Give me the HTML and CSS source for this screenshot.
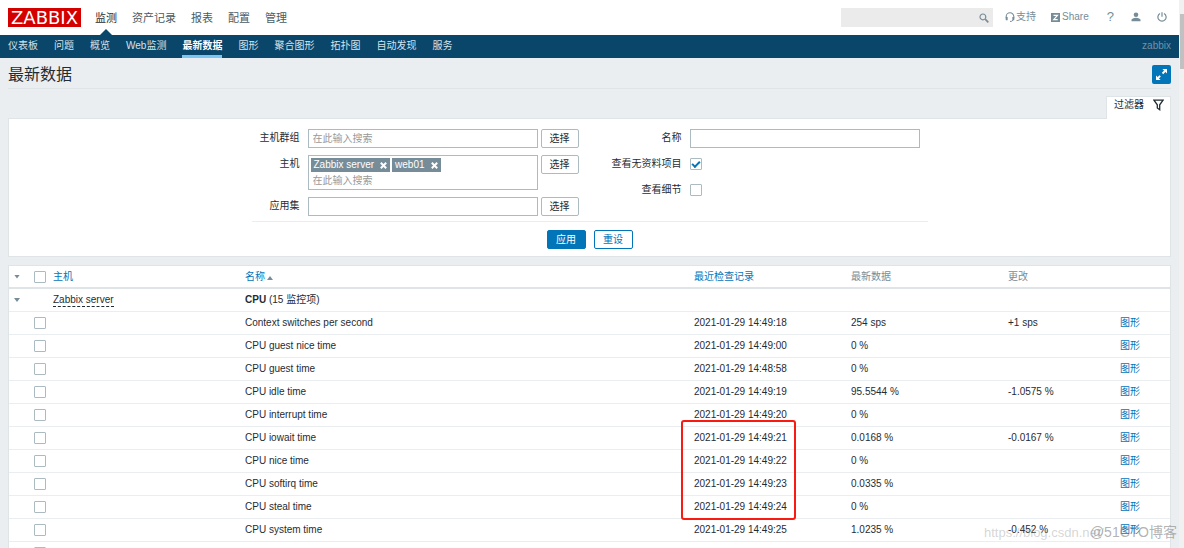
FILE: index.html
```html
<!DOCTYPE html>
<html lang="zh-CN">
<head>
<meta charset="utf-8">
<title>最新数据</title>
<link rel="stylesheet" href="styles.css">
</head>
<body>
<div class="page">
<header class="top">
  <a class="logo" href="#">ZABBIX</a>
  <nav class="menu">
    <a class="current" href="#">监测</a><a href="#">资产记录</a><a href="#">报表</a><a href="#">配置</a><a href="#">管理</a>
  </nav>
  <form class="search">
    <input type="text" aria-label="Search">
    <button type="button" aria-label="Go"><svg width="10" height="10" viewBox="0 0 10 10" fill="none" stroke="#768d99"><circle cx="3.9" cy="3.9" r="2.9" stroke-width="1.2"/><path d="M6.2 6.2L9.3 9.3" stroke-width="1.7"/></svg></button>
  </form>
  <div class="tools">
    <a class="support" href="#"><svg width="10" height="10" viewBox="0 0 10 10" fill="none" stroke="#768d99"><path d="M1.2 6.5V4.6a3.8 3.8 0 0 1 7.6 0v1.9" stroke-width="1.1"/><path d="M1.7 5v3.2M8.3 5v3.2" stroke-width="1.9"/><path d="M8.3 8L6.4 9.4H5" stroke-width="1"/></svg>支持</a>
    <a class="share" href="#"><svg width="9" height="9" viewBox="0 0 9 9"><rect width="9" height="9" fill="#768d99"/><path d="M2.5 2.3h4L2.7 6.7h4" fill="none" stroke="#fff" stroke-width="1.2"/></svg>Share</a>
    <a class="help" href="#">?</a>
    <a class="user" href="#" aria-label="Profile"><svg width="10" height="10" viewBox="0 0 10 10" fill="#768d99"><circle cx="5" cy="2.7" r="2.3"/><path d="M.5 9.3V7.6Q1.8 5.8 5 5.8t4.5 1.8v1.7z"/></svg></a>
    <a class="power" href="#" aria-label="Sign out"><svg width="10" height="10" viewBox="0 0 10 10" fill="none" stroke="#768d99" stroke-width="1.2"><path d="M3 1.5a4.1 4.1 0 1 0 4 0M5 .2v4.6"/></svg></a>
  </div>
</header>
<nav class="sub">
  <a href="#">仪表板</a><a href="#">问题</a><a href="#">概览</a><a href="#">Web监测</a><a class="selected" href="#">最新数据</a><a href="#">图形</a><a href="#">聚合图形</a><a href="#">拓扑图</a><a href="#">自动发现</a><a href="#">服务</a>
  <span class="server">zabbix</span>
</nav>
<main>
  <div class="title">
    <h1>最新数据</h1>
    <button class="full" type="button" aria-label="Fullscreen"><svg width="11" height="11" viewBox="0 0 11 11" fill="#fff" stroke="#fff"><path d="M6.4 0H11v4.6zM0 6.4V11h4.6z" stroke="none"/><path d="M9 2L6.5 4.5M2 9l2.2-2.2" stroke-width="1.8"/></svg></button>
  </div>
  <div class="tabs"><a class="tab" href="#">过滤器<svg width="11" height="12" viewBox="0 0 11 12" fill="none" stroke="#1f2c33" stroke-width="1.3"><path d="M.9 1.2h9.2L6.7 5.8v4.9L4.3 9V5.8z"/></svg></a></div>
  <form class="filter">
    <div class="fields">
      <div class="column">
        <div class="field"><label for="groups">主机群组</label><div class="multi"><input id="groups" type="text" placeholder="在此输入搜索"></div><button class="pick" type="button">选择</button></div>
        <div class="field"><label for="hosts">主机</label><div class="multi"><div class="tags"><span class="tag">Zabbix server<button type="button" aria-label="Remove"><svg width="7" height="7" viewBox="0 0 7 7" stroke="#fff" stroke-width="2"><path d="M.8.8l5.4 5.4M6.2.8L.8 6.2"/></svg></button></span><span class="tag">web01<button type="button" aria-label="Remove"><svg width="7" height="7" viewBox="0 0 7 7" stroke="#fff" stroke-width="2"><path d="M.8.8l5.4 5.4M6.2.8L.8 6.2"/></svg></button></span></div><input id="hosts" type="text" placeholder="在此输入搜索"></div><button class="pick" type="button">选择</button></div>
        <div class="field"><label for="app">应用集</label><div class="multi"><input id="app" type="text"></div><button class="pick" type="button">选择</button></div>
      </div>
      <div class="column right">
        <div class="field"><label for="name">名称</label><div class="multi"><input id="name" type="text"></div></div>
        <div class="field"><label for="empty">查看无资料项目</label><input id="empty" type="checkbox" checked></div>
        <div class="field"><label for="details">查看细节</label><input id="details" type="checkbox"></div>
      </div>
    </div>
    <div class="actions"><button class="apply" type="button">应用</button><button class="reset" type="button">重设</button></div>
  </form>
  <table class="data">
    <colgroup><col class="c-arrow"><col class="c-check"><col class="c-host"><col><col class="c-value"><col class="c-value"><col class="c-change"><col class="c-link"></colgroup>
    <thead>
      <tr><th><button class="toggle" type="button" aria-label="Collapse all"></button></th><th><input type="checkbox" aria-label="Select all"></th><th><a href="#">主机</a></th><th><a class="sorted" href="#">名称</a></th><th><a href="#">最近检查记录</a></th><th>最新数据</th><th>更改</th><th></th></tr>
    </thead>
    <tbody>
      <tr><td><button class="toggle" type="button" aria-label="Collapse"></button></td><td></td><td><a class="host" href="#">Zabbix server</a></td><td colspan="5"><b>CPU</b> (15 监控项)</td></tr>
      <tr><td></td><td><input type="checkbox" aria-label="Select item"></td><td></td><td>Context switches per second</td><td>2021-01-29 14:49:18</td><td>254 sps</td><td>+1 sps</td><td><a href="#">图形</a></td></tr>
      <tr><td></td><td><input type="checkbox" aria-label="Select item"></td><td></td><td>CPU guest nice time</td><td>2021-01-29 14:49:00</td><td>0 %</td><td></td><td><a href="#">图形</a></td></tr>
      <tr><td></td><td><input type="checkbox" aria-label="Select item"></td><td></td><td>CPU guest time</td><td>2021-01-29 14:48:58</td><td>0 %</td><td></td><td><a href="#">图形</a></td></tr>
      <tr><td></td><td><input type="checkbox" aria-label="Select item"></td><td></td><td>CPU idle time</td><td>2021-01-29 14:49:19</td><td>95.5544 %</td><td>-1.0575 %</td><td><a href="#">图形</a></td></tr>
      <tr><td></td><td><input type="checkbox" aria-label="Select item"></td><td></td><td>CPU interrupt time</td><td>2021-01-29 14:49:20</td><td>0 %</td><td></td><td><a href="#">图形</a></td></tr>
      <tr><td></td><td><input type="checkbox" aria-label="Select item"></td><td></td><td>CPU iowait time</td><td class="marked">2021-01-29 14:49:21<span class="mark"></span></td><td>0.0168 %</td><td>-0.0167 %</td><td><a href="#">图形</a></td></tr>
      <tr><td></td><td><input type="checkbox" aria-label="Select item"></td><td></td><td>CPU nice time</td><td>2021-01-29 14:49:22</td><td>0 %</td><td></td><td><a href="#">图形</a></td></tr>
      <tr><td></td><td><input type="checkbox" aria-label="Select item"></td><td></td><td>CPU softirq time</td><td>2021-01-29 14:49:23</td><td>0.0335 %</td><td></td><td><a href="#">图形</a></td></tr>
      <tr><td></td><td><input type="checkbox" aria-label="Select item"></td><td></td><td>CPU steal time</td><td>2021-01-29 14:49:24</td><td>0 %</td><td></td><td><a href="#">图形</a></td></tr>
      <tr><td></td><td><input type="checkbox" aria-label="Select item"></td><td></td><td>CPU system time</td><td>2021-01-29 14:49:25</td><td>1.0235 %</td><td>-0.452 %</td><td><a href="#">图形</a></td></tr>
      <tr><td></td><td><input type="checkbox" aria-label="Select item"></td><td></td><td></td><td></td><td></td><td></td><td></td></tr>
    </tbody>
  </table>
</main>
</div>
<div class="scrollbar"><div class="thumb"></div></div>
<div class="stamp url">https://blog.csdn.net/</div>
<div class="stamp brand">@51CTO博客</div>
</body>
</html>
```
FILE: styles.css
```css
* { box-sizing: border-box; }
body {
  margin: 0;
  height: 100vh;
  overflow: hidden;
  position: relative;
  display: flex;
  background: #ebeef0;
  color: #1f2c33;
  font: 10px/14px "Liberation Sans", "Noto Sans CJK SC", sans-serif;
}
a { color: #0275b8; text-decoration: none; }
button, input { font: inherit; color: inherit; margin: 0; padding: 0; }
button { cursor: pointer; }
svg { display: block; flex: none; }
.page { flex: 1; min-width: 0; }

.top { display: flex; align-items: center; height: 35px; padding: 0 12px 0 8px; background: #fff; }
.logo { padding: 0 3px; background: #d40000; color: #fff; font: 18px/19px "DejaVu Sans", sans-serif; }
.menu { display: flex; gap: 15px; margin-left: 14px; font-size: 11px; line-height: 34px; }
.menu a { position: relative; color: #4a5b65; }
.menu .current { color: #1f2c33; }
.menu .current::after {
  content: "";
  position: absolute;
  left: 4px;
  bottom: -1px;
  border: 7px solid transparent;
  border-top: 0;
  border-bottom-color: #0a466a;
}
.search { display: flex; width: 152px; height: 19px; margin-left: auto; background: #ebebeb; }
.search input { flex: 1; min-width: 0; border: 0; background: none; }
.search button { display: grid; place-items: center; width: 19px; border: 0; background: none; }
.tools { display: flex; align-items: center; height: 34px; margin-left: 12px; padding-bottom: 1px; }
.tools a { display: flex; align-items: center; color: #768d99; }
.support { gap: 1px; }
.share { gap: 2px; margin-left: 15px; }
.tools .help { margin-left: 18px; font-size: 13px; }
.user { margin-left: 17px; }
.power { margin-left: 16px; }

.sub { display: flex; gap: 16px; height: 23px; padding: 0 8px; background: #0a466a; line-height: 22px; white-space: nowrap; }
.sub a { color: #d5e3ec; }
.sub .selected { border-bottom: 3px solid #7cc5ef; color: #fff; font-weight: bold; }
.server { margin-left: auto; color: #6f93a9; }

main { padding: 0 8px; }
.title { display: flex; align-items: center; justify-content: space-between; height: 31px; padding-top: 3px; border-bottom: 1px solid #dfe4e7; }
h1 { margin: 0; font-size: 16px; font-weight: normal; line-height: 24px; }
.full { display: grid; place-items: center; width: 19px; height: 19px; border: 0; border-radius: 2px; background: #0275b8; }
.tabs { display: flex; justify-content: flex-end; padding-top: 7px; }
.tab { display: flex; align-items: flex-start; gap: 9px; height: 23px; margin-bottom: -1px; padding: 1px 6px 0 7px; border: 1px solid #dfe4e7; border-bottom: 0; background: #fff; color: #1f2c33; position: relative; }
.tab svg { margin-top: 1px; }

.filter { padding: 10px 0 7px; border: 1px solid #dfe4e7; background: #fff; }
.fields { display: flex; justify-content: space-between; width: 676px; max-width: 100%; margin: 0 auto; padding: 0 8px 5px 0; border-bottom: 1px solid #ebeef0; }
.column { display: flex; flex-direction: column; gap: 7px; }
.field { display: flex; align-items: flex-start; }
.field label { flex: 1; min-width: 48px; margin-right: 8px; line-height: 18px; text-align: right; }
.multi { width: 230px; padding: 0 3px; border: 1px solid #acbbc2; }
.multi input { display: block; width: 100%; height: 17px; padding: 0 1px; border: 0; outline: 0; background: none; }
.multi input::placeholder { color: #999; opacity: 1; }
.tags { display: flex; gap: 2px; padding-top: 2px; margin-left: -1px; }
.tag { display: flex; align-items: center; gap: 6px; padding: 0 3px; background: #768d99; color: #fff; }
.tag button { border: 0; background: none; }
.pick { width: 38px; height: 19px; margin-left: 3px; border: 1px solid #acbbc2; border-radius: 2px; background: #fff; }
.right .field { min-height: 19px; }
.right input[type="checkbox"] { margin: 3px 218px 0 0; }
input[type="checkbox"] {
  appearance: none;
  display: block;
  flex: none;
  width: 12px;
  height: 12px;
  border: 1px solid #acbbc2;
  border-radius: 1px;
  background: #fff;
}
input[type="checkbox"]:checked::after {
  content: "";
  display: block;
  box-sizing: border-box;
  width: 8px;
  height: 5px;
  margin: 2px 0 0 1px;
  border: solid #0275b8;
  border-width: 0 0 2px 2px;
  transform: rotate(-45deg);
}
.actions { display: flex; justify-content: center; gap: 8px; padding-top: 8px; }
.actions button { width: 39px; height: 19px; border: 1px solid #0275b8; border-radius: 2px; }
.actions .apply { background: #0275b8; color: #fff; }
.actions .reset { background: #fff; color: #0275b8; }

.data { width: 100%; margin-top: 8px; border: 1px solid #dfe4e7; border-spacing: 0; table-layout: fixed; background: #fff; }
.c-arrow { width: 20px; }
.c-check { width: 19px; }
.c-host { width: 192px; }
.c-value { width: 157px; }
.c-change { width: 112px; }
.c-link { width: 55px; }
th, td { height: 23px; padding: 0 0 0 5px; border-bottom: 1px solid #ebeef0; text-align: left; font-weight: normal; white-space: nowrap; }
th { border-bottom: 2px solid #dfe4e7; color: #768d99; }
.toggle { display: block; width: 6px; height: 4px; border: 0; background: #768d99; clip-path: polygon(0 0, 100% 0, 50% 100%); }
.sorted::after { content: ""; display: inline-block; margin-left: 2px; border: 3px solid transparent; border-top: 0; border-bottom: 4px solid #768d99; }
.host { display: inline-block; border-bottom: 1px dashed #1f2c33; color: #1f2c33; line-height: 12px; }
.marked { position: relative; }
.mark { position: absolute; left: -8px; top: -7px; width: 115px; height: 100px; border: 2px solid #f91a12; border-radius: 3px; pointer-events: none; }

.scrollbar { width: 5px; padding: 14px 0 0 1px; background: #f1f1f1; }
.thumb { height: 55px; background: #c1c1c1; }
.stamp { position: absolute; pointer-events: none; white-space: nowrap; }
.url { left: 984px; bottom: 6px; color: rgba(150, 150, 150, .4); font-size: 13px; line-height: 18px; }
.brand { right: 7px; bottom: 6px; color: rgba(135, 135, 135, .65); font-size: 14px; line-height: 20px; }
```
